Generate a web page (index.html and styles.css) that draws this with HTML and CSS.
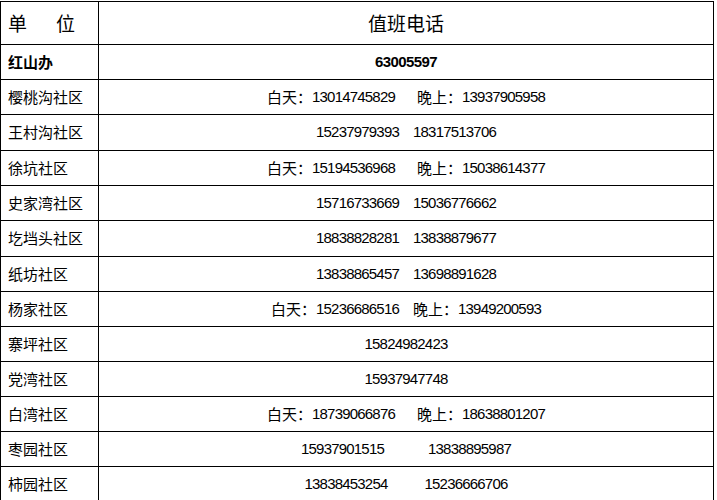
FILE: index.html
```html
<!DOCTYPE html>
<html lang="zh">
<head>
<meta charset="utf-8">
<title>值班电话</title>
<link rel="stylesheet" href="styles.css">
</head>
<body>
<div class="sheet">
  <div class="cell unit head"><span>单</span><span class="spread">位</span></div>
  <div class="cell phone head">值班电话</div>

  <div class="cell unit bold">红山办</div>
  <div class="cell phone bold"><span class="num">63005597</span></div>

  <div class="cell unit">樱桃沟社区</div>
  <div class="cell phone"><span>白天：</span><span class="num">13014745829</span><span class="g3">晚上：</span><span class="num">13937905958</span></div>

  <div class="cell unit">王村沟社区</div>
  <div class="cell phone"><span class="num">15237979393</span><span class="num g2">18317513706</span></div>

  <div class="cell unit">徐坑社区</div>
  <div class="cell phone"><span>白天：</span><span class="num">15194536968</span><span class="g3">晚上：</span><span class="num">15038614377</span></div>

  <div class="cell unit">史家湾社区</div>
  <div class="cell phone"><span class="num">15716733669</span><span class="num g2">15036776662</span></div>

  <div class="cell unit">圪垱头社区</div>
  <div class="cell phone"><span class="num">18838828281</span><span class="num g2">13838879677</span></div>

  <div class="cell unit">纸坊社区</div>
  <div class="cell phone"><span class="num">13838865457</span><span class="num g2">13698891628</span></div>

  <div class="cell unit">杨家社区</div>
  <div class="cell phone"><span>白天：</span><span class="num">15236686516</span><span class="g2">晚上：</span><span class="num">13949200593</span></div>

  <div class="cell unit">寨坪社区</div>
  <div class="cell phone"><span class="num">15824982423</span></div>

  <div class="cell unit">党湾社区</div>
  <div class="cell phone"><span class="num">15937947748</span></div>

  <div class="cell unit">白湾社区</div>
  <div class="cell phone"><span>白天：</span><span class="num">18739066876</span><span class="g3">晚上：</span><span class="num">18638801207</span></div>

  <div class="cell unit">枣园社区</div>
  <div class="cell phone"><span class="num">15937901515</span><span class="num g6">13838895987</span></div>

  <div class="cell unit">柿园社区</div>
  <div class="cell phone"><span class="num">13838453254</span><span class="num g5">15236666706</span></div>
</div>
</body>
</html>
```
FILE: styles.css
```css
html, body {
  margin: 0;
  padding: 0;
  background: #fff;
}

body {
  font-family: "Noto Sans CJK SC", "Liberation Sans", sans-serif;
  color: #000;
  font-size: 15px;
}

.sheet {
  display: grid;
  grid-template-columns: 98px 615px;
  grid-template-rows: 43px 35px 35px 36px 35px 35px 36px 35px 35px 35px 35px 35px 35px 35px;
  width: max-content;
  margin-top: 1px;
  border-left: 1px solid #000;
  border-top: 1px solid #000;
}

.cell {
  box-sizing: border-box;
  border-right: 1px solid #000;
  border-bottom: 1px solid #000;
  display: flex;
  align-items: center;
  white-space: nowrap;
  line-height: 1;
  padding-bottom: 2px;
}

.unit {
  padding-left: 7px;
}

.phone {
  justify-content: center;
}

.head {
  font-size: 19px;
}

.spread {
  margin-left: 29px;
}

.bold {
  font-weight: bold;
}

.num {
  font-family: "Liberation Sans", sans-serif;
  letter-spacing: -0.8px;
}

.bold .num {
  letter-spacing: -0.6px;
}

.g2 { margin-left: 14px; }
.g3 { margin-left: 22px; }
.g5 { margin-left: 37px; }
.g6 { margin-left: 44px; }
```
